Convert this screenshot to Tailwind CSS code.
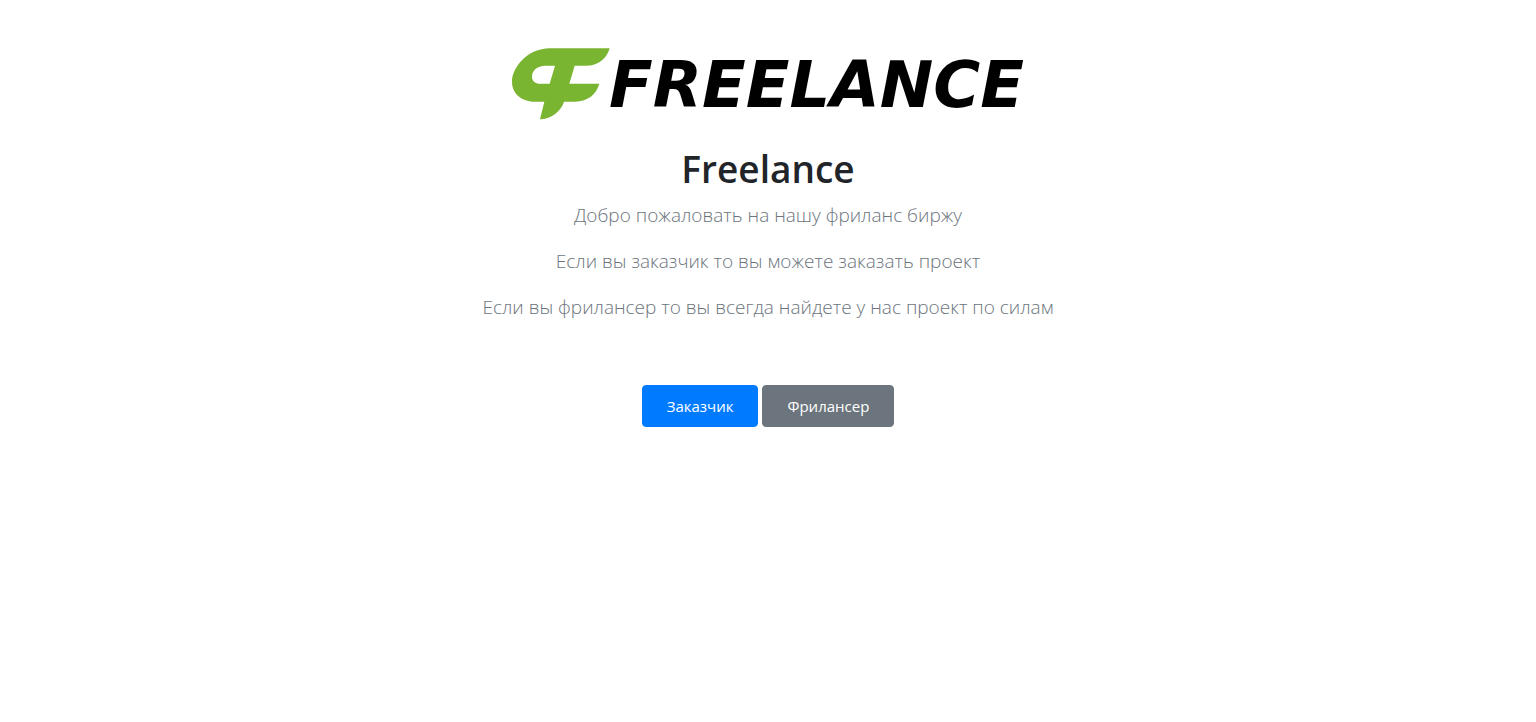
<!DOCTYPE html>
<html lang="ru">
<head>
<meta charset="utf-8">
<meta name="viewport" content="width=device-width, initial-scale=1">
<title>Freelance</title>
<script src="https://cdn.jsdelivr.net/npm/@tailwindcss/browser@4"></script>
</head>
<body class="bg-white font-['Open_Sans','Noto_Sans',sans-serif] text-[#212529]">
<main class="flex flex-col items-center pt-12 text-center">
  <svg class="w-1/3 h-auto overflow-visible" viewBox="0 0 512 72" role="img" aria-label="Freelance">
    <g transform="translate(-12 -8) scale(.33333)" fill="#7ab532">
      <path fill-rule="evenodd" d="M329 25H150C80 25 36 85 36 125C36 165 70 185 105 185H133L120 238C155 238 185 210 192 185H225C265 185 290 160 298 131H208L224 77H262C300 77 322 50 329 25ZM165 77H137C110 77 96 92 96 110C96 124 107 131 120 131H149Z"/>
    </g>
    <text x="97" y="59" class="font-['DejaVu_Sans',sans-serif] text-[64px] font-bold italic">FREELANCE</text>
  </svg>
  <h1 class="mt-6 mb-1.5 text-[37px] leading-[50px] font-semibold">Freelance</h1>
  <div class="flex flex-col gap-4 text-[19px] leading-[30px] font-light text-[#6c757d]">
    <p>Добро пожаловать на нашу фриланс биржу</p>
    <p>Если вы заказчик то вы можете заказать проект</p>
    <p>Если вы фрилансер то вы всегда найдете у нас проект по силам</p>
  </div>
  <div class="mt-[63px] flex flex-wrap justify-center gap-1">
    <button type="button" class="rounded border border-[#007bff] bg-[#007bff] px-6 py-2 text-[15px] leading-6 text-white">Заказчик</button>
    <button type="button" class="rounded border border-[#6c757d] bg-[#6c757d] px-6 py-2 text-[15px] leading-6 text-white">Фрилансер</button>
  </div>
</main>
</body>
</html>
